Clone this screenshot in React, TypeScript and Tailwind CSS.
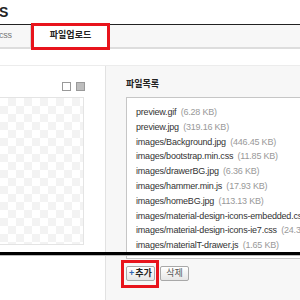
export default function App() {
  const files: [string, string][] = [
    ["preview.gif", "(6.28 KB)"],
    ["preview.jpg", "(319.16 KB)"],
    ["images/Background.jpg", "(446.45 KB)"],
    ["images/bootstrap.min.css", "(11.85 KB)"],
    ["images/drawerBG.jpg", "(6.36 KB)"],
    ["images/hammer.min.js", "(17.93 KB)"],
    ["images/homeBG.jpg", "(113.13 KB)"],
    ["images/material-design-icons-embedded.css", "(62.15 KB)"],
    ["images/material-design-icons-ie7.css", "(24.38 KB)"],
    ["images/materialT-drawer.js", "(1.65 KB)"],
  ];
  return (
    <div className="relative w-[300px] h-[300px] overflow-hidden bg-white font-['Liberation_Sans','Noto_Sans_CJK_KR',sans-serif]">
      <div className="h-[24px] flex items-center text-[14px] font-bold text-[#222] leading-none ml-[-1px]">S</div>
      <div className="h-[25px] border-t border-t-[#222] border-b-2 border-b-[#dddddd] bg-[#f7f7f7] flex">
        <div className="w-[31px] shrink-0 border-r border-[#d6d6d6] flex items-center text-[9px] text-[#777] tracking-[-0.2px] overflow-hidden">
          <span className="ml-[-1px]">css</span>
        </div>
        <div className="w-[79px] shrink-0 bg-white flex items-center justify-center text-[9px] font-bold text-[#222]">파일업로드</div>
      </div>
      <div className="h-[16px]" />
      <div className="flex h-[240px] border-t border-[#ececec]">
        <div className="w-[105px] shrink-0 flex flex-col">
          <div className="w-[85px] flex justify-end gap-[5px] mt-[16px]">
            <div className="w-[9px] h-[9px] border border-[#999] bg-white" />
            <div className="w-[9px] h-[9px] border border-[#999] bg-[#bdbdbd]" />
          </div>
          <div className="mt-[6px] ml-[-1px] w-[85px] h-[148px] border border-[#e4e4e4] bg-[conic-gradient(#f3f3f3_25%,#ffffff_0_50%,#f3f3f3_0_75%,#ffffff_0)] bg-[length:16px_16px]" />
        </div>
        <div className="flex-1 min-w-0 border-l border-[#e2e2e2] bg-[#f7f7f7] pl-[20px]">
          <div className="mt-[13px] h-[12px] flex items-center text-[9px] font-bold text-[#222]">파일목록</div>
          <div className="mt-[6px] w-[220px] h-[162px] border border-[#c6c6c6] bg-white pt-[7px] pl-[9px] overflow-hidden">
            {files.map(([n, s]) => (
              <div key={n} className="leading-[14.8px] text-[9px] tracking-[-0.2px] whitespace-nowrap text-[#333]">
                {n} <span className="text-[#999] ml-[2px]">{s}</span>
              </div>
            ))}
          </div>
          <div className="mt-[7px] flex gap-[5px]">
            <button className="w-[29px] h-[15px] border border-[#a8a8a8] rounded-[2px] bg-[linear-gradient(#ffffff,#e6e6e6)] flex items-center justify-center text-[9px] font-bold text-[#222] leading-none">
              <span className="text-[#2f63b0] mr-[1px]">+</span>추가
            </button>
            <button className="w-[29px] h-[15px] border border-[#a8a8a8] rounded-[2px] bg-[linear-gradient(#ffffff,#e6e6e6)] flex items-center justify-center text-[9px] text-[#555] leading-none">
              삭제
            </button>
          </div>
        </div>
      </div>
      <div className="absolute left-0 top-[252px] w-[300px] h-[3px] bg-black" />
      <div className="absolute left-0 top-[255px] w-[300px] h-[1px] bg-[#bbbbbb]" />
      <div className="absolute left-[31px] top-[23px] w-[79px] h-[27px] border-[3px] border-[#e8141c]" />
      <div className="absolute left-[121px] top-[260px] w-[38px] h-[28px] border-[3px] border-[#e8141c]" />
    </div>
  );
}
